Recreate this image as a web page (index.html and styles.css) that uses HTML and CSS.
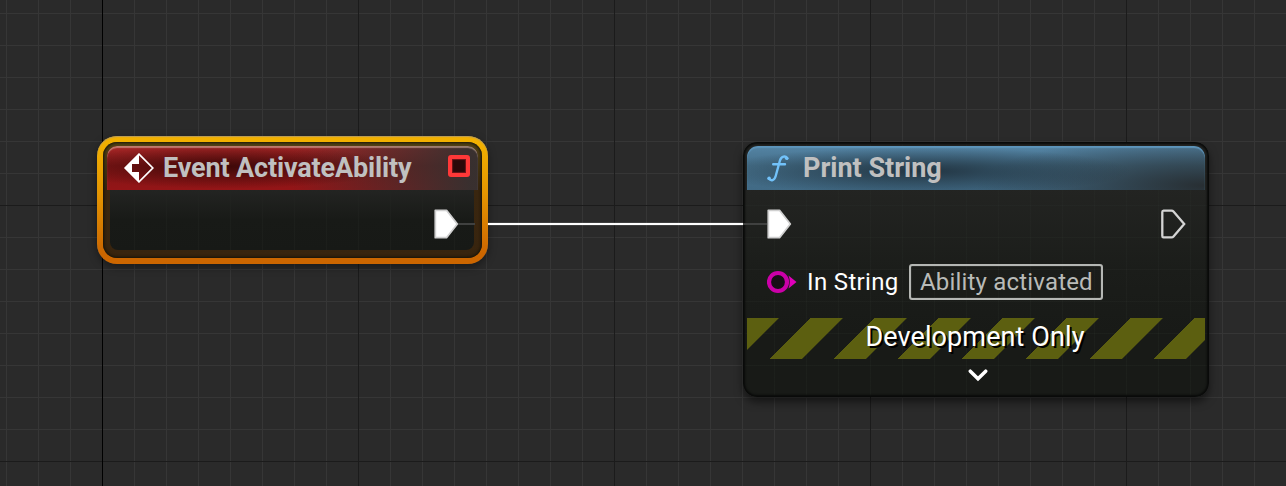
FILE: index.html
```html
<!DOCTYPE html>
<html lang="en">
<head>
<meta charset="utf-8">
<title>Blueprint graph</title>
<link rel="stylesheet" href="styles.css">
</head>
<body>
<main class="graph">
  <section class="node event-node">
    <div class="event-inner">
      <header class="node-header event-header">
        <svg class="event-icon" width="30" height="30" viewBox="0 0 30 30"><path d="M15 1.2 28.8 15 15 28.8 1.2 15Z" fill="none" stroke="#fff" stroke-width="1.7"/><path d="M15 0.5V11H8V19H15V29.5L.5 15Z" fill="#fff"/></svg>
        <h2 class="title event-title">Event ActivateAbility</h2>
        <span class="delegate-pin"></span>
      </header>
      <div class="event-row">
        <svg width="25" height="30" viewBox="0 0 25 30"><path d="M1.3 1.3H12.5L23.3 15 12.5 28.7H1.3Z" fill="#fff" stroke="#d0d0d0" stroke-width="1.8" stroke-linejoin="round"/></svg>
      </div>
    </div>
  </section>
  <section class="node print-node">
    <header class="node-header print-header">
      <svg class="function-icon" width="22" height="27" viewBox="0 0 22 27"><path d="M20.2 3.4C18.5 .5 14.4 1 13 5.3L8.7 21C7.4 25.7 4 26.4 1.8 23.6M6.2 9.2H18" fill="none" stroke="#72c2fa" stroke-width="2.4" stroke-linecap="round"/><circle cx="19.7" cy="3.3" r="1.8" fill="#72c2fa"/><circle cx="2.1" cy="23.4" r="1.8" fill="#72c2fa"/></svg>
      <h2 class="title print-title">Print String</h2>
    </header>
    <div class="exec-row">
      <svg width="25" height="30" viewBox="0 0 25 30"><path d="M1.3 1.3H12.5L23.3 15 12.5 28.7H1.3Z" fill="#fff" stroke="#d0d0d0" stroke-width="1.8" stroke-linejoin="round"/></svg>
      <svg width="25" height="30" viewBox="0 0 25 30"><path d="M2.5 1.6H10.5Q11.7 1.6 12.5 2.5L23.2 15 12.5 27.5Q11.7 28.4 10.5 28.4H2.5Q1.3 28.4 1.3 27V3Q1.3 1.6 2.5 1.6Z" fill="none" stroke="#d4d4d4" stroke-width="2.3"/></svg>
    </div>
    <div class="string-row">
      <svg width="30" height="24" viewBox="0 0 30 24"><circle cx="11" cy="12" r="9" fill="#170e16" stroke="#cb00a8" stroke-width="4.2"/><path d="M21.5 5.5 29.5 12 21.5 18.5Q24 12 21.5 5.5Z" fill="#e000ba"/></svg>
      <span class="pin-label">In String</span>
      <span class="value-box"><span class="value-text">Ability activated</span></span>
    </div>
    <div class="dev-banner"><span class="dev-text">Development Only</span></div>
    <div class="expand-row">
      <svg width="20" height="13" viewBox="0 0 20 13"><path d="M2.3 2.2 10 9.8 17.7 2.2" fill="none" stroke="#fff" stroke-width="3.5" stroke-linecap="round"/></svg>
    </div>
  </section>
  <span class="wire"></span>
  <span class="wire-dim wire-start"></span>
  <span class="wire-dim wire-end"></span>
</main>
</body>
</html>
```

FILE: styles.css
```css
* { box-sizing: border-box; }
body { margin: 0; overflow: hidden; font-family: Roboto, "Liberation Sans", sans-serif; }
svg { display: block; flex: none; }
.graph {
  position: relative;
  width: 1286px;
  height: 486px;
  overflow: hidden;
  background-color: #2a2a2a;
  background-image:
    linear-gradient(#000, #000),
    linear-gradient(90deg, #1b1b1b 1px, transparent 1px),
    linear-gradient(#1b1b1b 1px, transparent 1px),
    linear-gradient(90deg, #363636 1px, transparent 1px),
    linear-gradient(#363636 1px, transparent 1px);
  background-size: 1px 100%, 256px 256px, 256px 256px, 32px 32px, 32px 32px;
  background-position: 102px 0, 102px 205px, 102px 205px, 6px 13px, 6px 13px;
  background-repeat: no-repeat, repeat, repeat, repeat, repeat;
}
.node { position: absolute; }
.node-header { display: flex; align-items: center; height: 44px; }
.title { margin: 0; font-size: 27px; line-height: 32px; font-weight: 700; color: #c0c0c0; white-space: nowrap; }

.event-node {
  left: 97px;
  top: 136px;
  width: 391px;
  height: 128px;
  padding: 6px;
  border-radius: 20px;
  box-shadow: 0 3px 8px rgba(0, 0, 0, .4), inset 0 1px 1px rgba(170, 150, 110, .8);
  background: linear-gradient(#f2b000 6%, #e59500 45%, #cc6600 92%);
}
.event-inner {
  height: 116px;
  padding: 4px;
  border-radius: 14px;
  background: linear-gradient(#554515, #39260f 40%, #38240e);
  box-shadow: inset 0 0 3px 1px #151208;
}
.event-header {
  padding: 0 4px 0 17px;
  border-radius: 10px 10px 0 0;
  background:
    radial-gradient(ellipse 170px 22px at 32% 47%, rgba(40, 4, 4, .75), transparent),
    linear-gradient(90deg, transparent 50%, rgba(52, 49, 48, .95) 98%),
    linear-gradient(#a82727, #811616 45%, #941517);
  box-shadow: inset 0 2px 1px rgba(210, 175, 155, .6);
}
.event-icon { margin-right: 9px; }
.event-title { width: 285px; letter-spacing: -.15px; }
.delegate-pin { flex: none; width: 22px; height: 22px; margin-top: -4px; border: 4px solid #ff3838; border-radius: 3px; background: #2b0809; box-shadow: inset 0 0 1px 1px #73171a; }
.event-row {
  display: flex;
  align-items: center;
  justify-content: flex-end;
  height: 60px;
  margin: 0 4px 0 3px;
  padding: 8px 15px 0 0;
  border-radius: 0 0 8px 8px;
  background:
    linear-gradient(90deg, rgba(35, 38, 34, .4) 1px, transparent 1px) 24px 0 / 32px 32px,
    linear-gradient(#232422, #181a17 50%, #171916);
}

.print-node {
  left: 743px;
  top: 142px;
  width: 466px;
  height: 255px;
  padding: 4px;
  border-radius: 14px;
  background:
    linear-gradient(90deg, rgba(47, 52, 47, .2) 1px, transparent 1px) 31px 0 / 32px 32px,
    linear-gradient(rgba(47, 52, 47, .2) 1px, transparent 1px) 0 31px / 32px 32px,
    linear-gradient(#232422 18%, #1b1d1a 50%, #181a17 75%);
  box-shadow: inset 0 0 2px 2px #090a09, 0 5px 9px rgba(0, 0, 0, .5);
}
.print-header {
  padding: 0 20px;
  border-radius: 11px 11px 0 0;
  background:
    radial-gradient(ellipse 210px 24px at 38% 57%, rgba(28, 43, 54, .85), transparent),
    radial-gradient(ellipse 230px 50px at 100% 90%, rgba(38, 43, 46, .95), transparent),
    linear-gradient(#5484a5, #456f89 45%, #416a85);
  box-shadow: inset 0 2px 1px #5d94ba;
}
.function-icon { margin-right: 14px; }
.exec-row { display: flex; justify-content: space-between; height: 74px; padding: 19px 19px 0 20px; }
.string-row { display: flex; align-items: center; height: 36px; margin-bottom: 18px; padding-left: 20px; }
.pin-label { width: 102px; margin-left: 10px; font-size: 24px; line-height: 30px; letter-spacing: .35px; color: #fff; white-space: nowrap; }
.value-box { display: flex; align-items: center; width: 194px; height: 36px; padding-left: 9px; border: 2px solid #b5b7b4; border-radius: 3px; box-shadow: inset 0 0 1px #b5b7b4; }
.value-text { font-size: 24px; line-height: 30px; letter-spacing: .18px; color: #b9bbb8; white-space: nowrap; }
.dev-banner {
  display: flex;
  align-items: center;
  justify-content: center;
  height: 41px;
  padding: 0 2px 4px 0;
  background: repeating-linear-gradient(135deg, #5c5f10 0 22.3px, transparent 22.9px 44.95px, #5c5f10 45.255px);
}
.dev-text { font-size: 27px; line-height: 32px; letter-spacing: .1px; color: #fff; text-shadow: 2px 2px 0 #000; white-space: nowrap; }
.expand-row { display: flex; justify-content: center; padding: 10px 0 0 4px; }

.wire { position: absolute; left: 488px; top: 223px; width: 255px; height: 2px; background: #fff; box-shadow: 0 0 1px #fff; }
.wire-dim { position: absolute; top: 223px; height: 2px; background: #404140; }
.wire-start { left: 458px; width: 17px; }
.wire-end { left: 743px; width: 24px; }
```
